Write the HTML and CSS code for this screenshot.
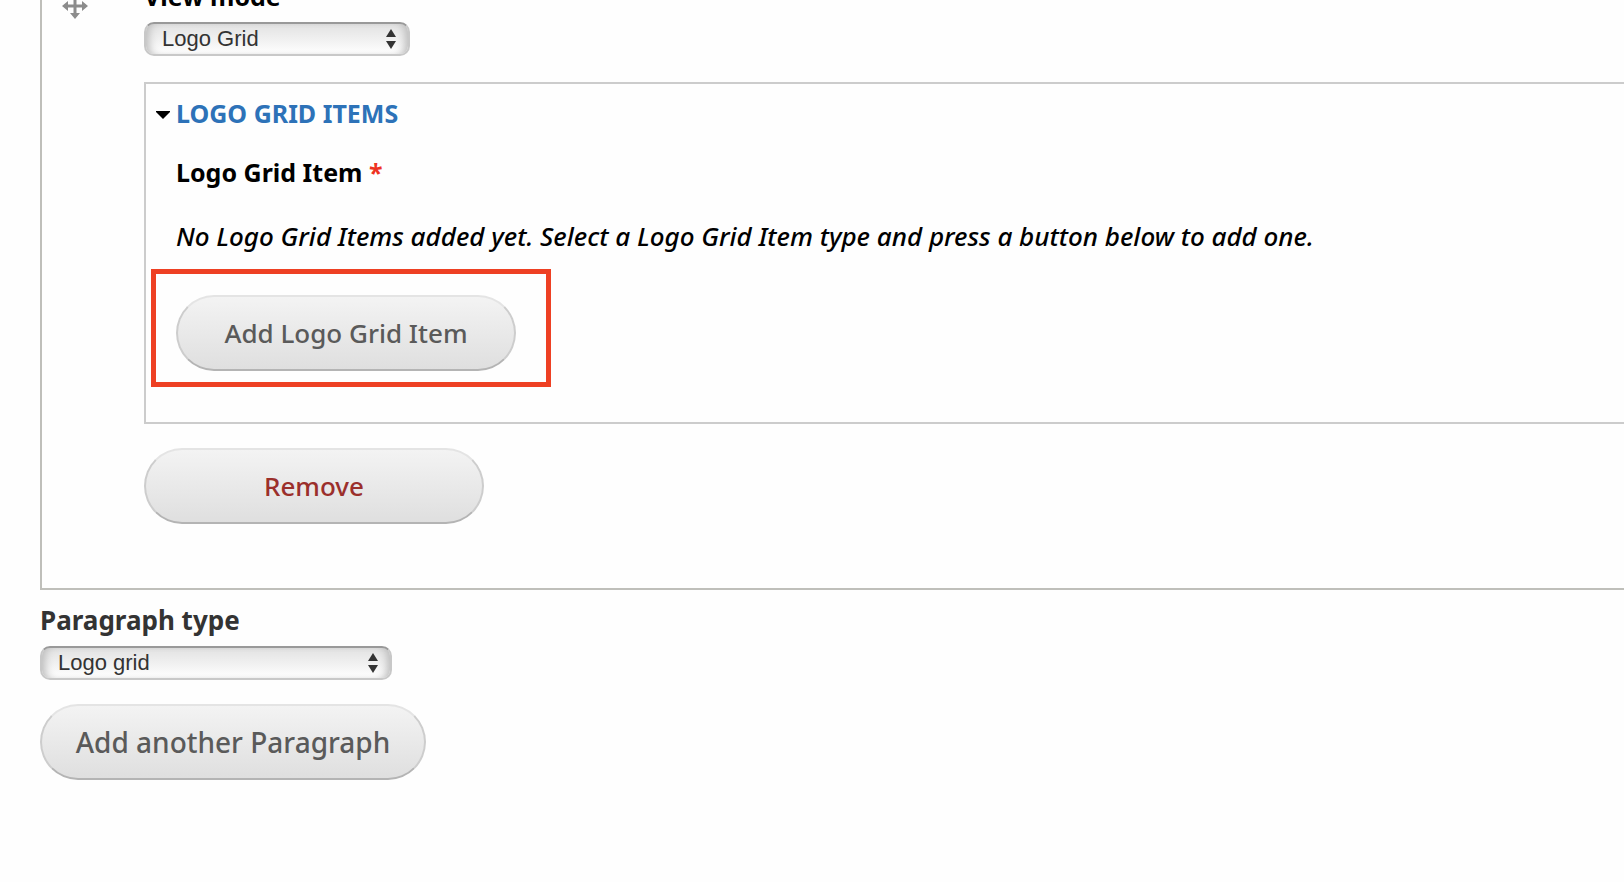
FILE: index.html
```html
<!DOCTYPE html>
<html lang="en">
<head>
<meta charset="utf-8">
<title>Edit paragraphs</title>
<link rel="stylesheet" href="styles.css">
</head>
<body>
<form class="form">
  <div class="paragraph">
    <div class="paragraph-handle">
      <svg class="drag-icon" width="26" height="26" viewBox="0 0 26 26" aria-hidden="true">
        <path d="M13 4v18M4 13h18" stroke="#8c8c8c" stroke-width="3" fill="none"/>
        <path d="M13 0l5 6H8zM13 26l5-6H8zM0 13l6-5v10zM26 13l-6-5v10z" fill="#8c8c8c"/>
      </svg>
    </div>
    <div class="paragraph-content">
      <label class="label" for="view-mode">View mode</label>
      <div class="select select-narrow">
        <select id="view-mode"><option>Logo Grid</option></select>
        <svg class="select-arrows" width="10" height="20" viewBox="0 0 10 20" aria-hidden="true"><path d="M5 0l5 8H0zM5 20l5-8H0z" fill="#333"/></svg>
      </div>
      <fieldset class="items">
        <legend class="items-legend">
          <svg width="14" height="12" viewBox="0 0 14 12" aria-hidden="true"><path d="M0 4h14v1L7 12 0 5z" fill="#000"/></svg>
          <a class="items-title" href="#">LOGO GRID ITEMS</a>
        </legend>
        <div class="items-body">
          <strong class="label">Logo Grid Item <span class="required">*</span></strong>
          <p class="empty">No Logo Grid Items added yet. Select a Logo Grid Item type and press a button below to add one.</p>
          <div class="highlight"><button class="button button-item" type="button">Add Logo Grid Item</button></div>
        </div>
      </fieldset>
      <button class="button button-item button-remove" type="button">Remove</button>
    </div>
  </div>
  <div class="add-more">
    <label class="label label-type" for="paragraph-type">Paragraph type</label>
    <div class="select select-wide">
      <select id="paragraph-type"><option>Logo grid</option></select>
      <svg class="select-arrows" width="10" height="20" viewBox="0 0 10 20" aria-hidden="true"><path d="M5 0l5 8H0zM5 20l5-8H0z" fill="#333"/></svg>
    </div>
    <button class="button button-add" type="button">Add another Paragraph</button>
  </div>
</form>
</body>
</html>
```

FILE: styles.css
```css
* { box-sizing: border-box; }

body {
  margin: 0;
  background: #fefefe;
  color: #000;
  font: 25px/32px "Lucida Grande", "Noto Sans", sans-serif;
  overflow: hidden;
}

/* The form is scrolled so that the first label is partly out of view. */
.form { margin: -20px 0 0 40px; }

.paragraph {
  display: flex;
  border: solid #bfbfba;
  border-width: 0 0 2px 2px;
  padding-bottom: 64px;
}

.paragraph-handle { flex: none; width: 102px; padding: 13px 0 0 20px; }
.drag-icon { display: block; }
.paragraph-content { flex: 1; min-width: 0; }

.label { display: block; font-weight: bold; }
.label-type { color: #333; font-size: 26px; }
.required { color: #e32; }

.select { position: relative; margin-top: 10px; max-width: 100%; }
.select-narrow { width: 266px; }
.select-wide { width: 352px; }

.select select {
  display: block;
  width: 100%;
  height: 34px;
  padding: 0 40px 0 16px;
  appearance: none;
  border: 2px solid #c8c8c8;
  border-top-color: #999;
  border-radius: 10px;
  background: linear-gradient(#e2e2e2, #f0f0f0 50%, #fff);
  box-shadow: inset 8px 0 8px -5px #bbb, inset -8px 0 8px -5px #bbb;
  color: #333;
  font: 22px/28px "Helvetica", "Liberation Sans", sans-serif;
}

.select-arrows { position: absolute; top: 7px; right: 14px; pointer-events: none; }

.items {
  min-width: 0;
  margin: 26px 0 24px;
  padding: 13px 0 51px;
  border: solid #ccc;
  border-width: 2px 0 2px 2px;
}

.items-legend {
  display: flex;
  float: left;
  align-items: center;
  gap: 6px;
  width: 100%;
  padding: 0 0 0 10px;
}

.items-title { color: #2d72b8; font-weight: bold; text-decoration: none; }
.items-body { clear: both; padding: 27px 0 0 30px; }
.empty { margin: 32px 0 43px; font-size: 26px; font-style: italic; font-weight: 500; }

.highlight { position: relative; width: max-content; }
.highlight::after {
  content: "";
  position: absolute;
  inset: -26px -35px -16px -25px;
  border: 5px solid #ee4023;
  pointer-events: none;
}

.button {
  display: block;
  height: 76px;
  border: 2px solid #cdcdcd;
  border-top-color: #e4e4e4;
  border-bottom-color: #b4b4b4;
  border-radius: 38px;
  background: linear-gradient(#f3f3f3, #dfdfdf);
  color: #5a5a5a;
  font: 500 26px/32px "Lucida Grande", "Noto Sans", sans-serif;
}

.button-item { width: 340px; }
.button-remove { color: #9b2f2b; }
.button-add { width: 386px; font-size: 28px; }

.add-more { padding-top: 14px; }
.add-more .select { margin-bottom: 24px; }
```
